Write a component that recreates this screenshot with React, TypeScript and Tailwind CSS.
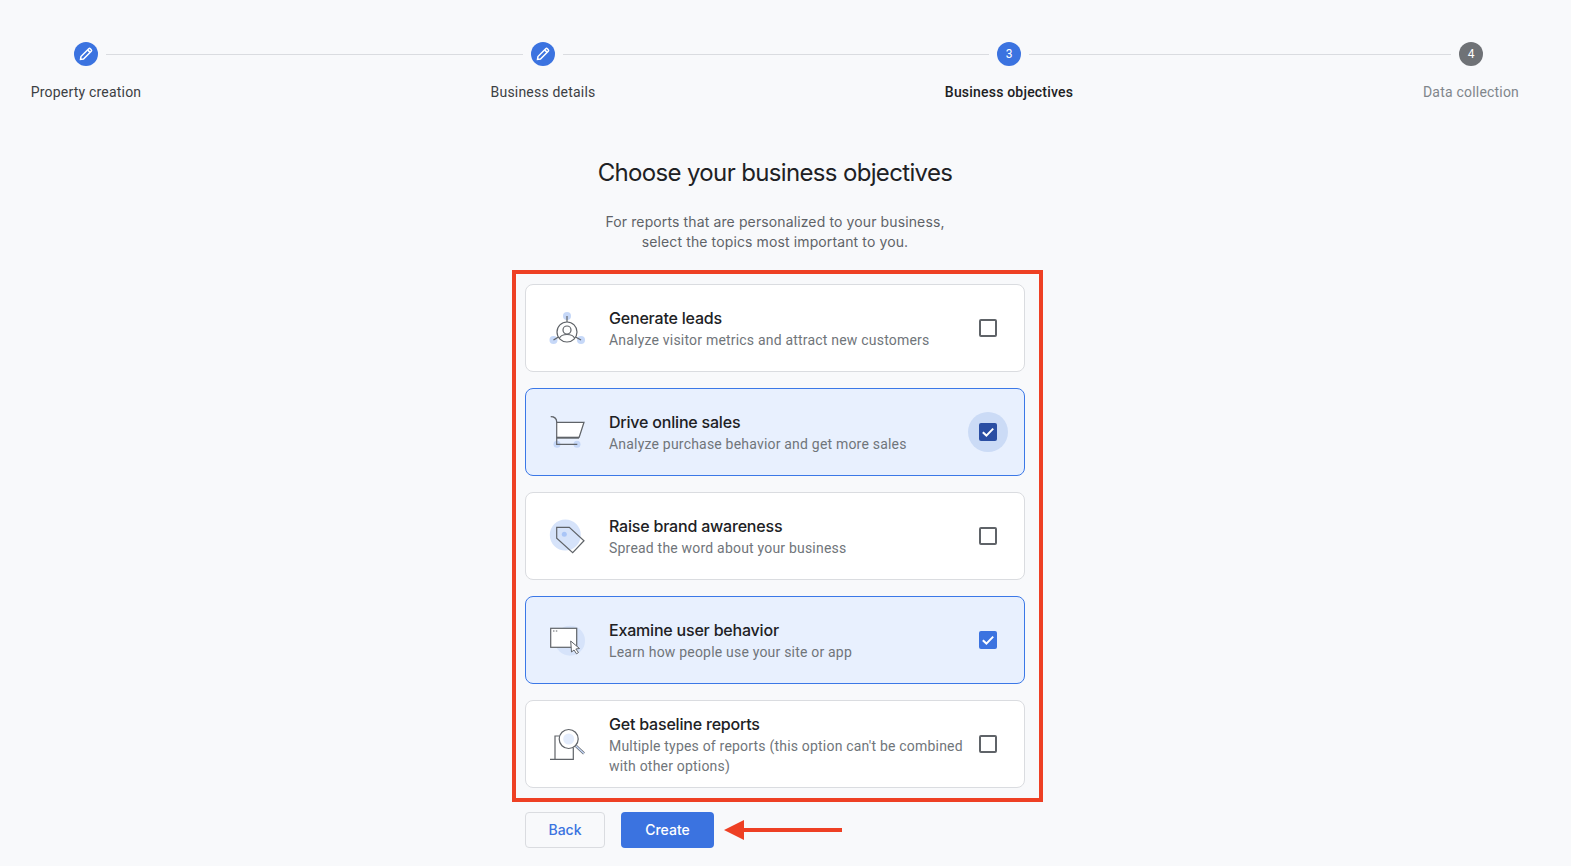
import * as React from "react";

type Step = { label: string; state: "done" | "active" | "todo"; num?: number };

const steps: Step[] = [
  { label: "Property creation", state: "done" },
  { label: "Business details", state: "done" },
  { label: "Business objectives", state: "active", num: 3 },
  { label: "Data collection", state: "todo", num: 4 },
];

const lineWidths = ["w-[417px]", "w-[426px]", "w-[422px]"];

function PencilIcon() {
  return (
    <svg width="16" height="16" viewBox="0 0 14 14" fill="none" stroke="#fff" strokeWidth="1.3">
      <path d="M2.2 11.8 L2.6 9.2 L9.4 2.4 a1 1 0 0 1 1.4 0 L11.6 3.2 a1 1 0 0 1 0 1.4 L4.8 11.4 Z" />
      <path d="M8.4 3.4 L10.6 5.6" />
    </svg>
  );
}

function LeadsIcon() {
  return (
    <svg width="40" height="40" viewBox="0 0 40 40" fill="none">
      <circle cx="20" cy="8" r="4" fill="#c6d8f8" />
      <circle cx="6.5" cy="32" r="4" fill="#c6d8f8" />
      <circle cx="34" cy="32" r="4" fill="#c6d8f8" />
      <g stroke="#5f6368" strokeWidth="1.2">
        <path d="M20 8 V14" />
        <path d="M6.5 32 L11.5 29" />
        <path d="M34 32 L28.5 29" />
        <circle cx="20" cy="24" r="10" />
        <circle cx="20" cy="22" r="4" />
        <path d="M12.5 30 C14 26.8 17 26.5 20 26.5 C23 26.5 26 26.8 27.5 30" />
      </g>
    </svg>
  );
}

function CartIcon() {
  return (
    <svg width="40" height="40" viewBox="0 0 40 40" fill="none">
      <circle cx="10" cy="32.3" r="3.5" fill="#c6d8f8" />
      <circle cx="30" cy="32.3" r="3.5" fill="#c6d8f8" />
      <path d="M9.7 10.3 H37 L32 25.7 H9.7 Z" fill="#fff" />
      <g stroke="#5f6368" strokeWidth="1.2">
        <path d="M3.7 4.7 C7 4.7 9.7 6.5 9.7 10 V32.3 H30.3" />
        <path d="M9.7 10.3 H37 L32 25.7" />
        <path d="M9.7 25.7 H32" strokeWidth="2" />
      </g>
    </svg>
  );
}

function TagIcon() {
  return (
    <svg width="40" height="40" viewBox="0 0 40 40" fill="none">
      <circle cx="18.3" cy="19" r="15.5" fill="#d6e3fa" />
      <circle cx="17.3" cy="18.3" r="2.5" fill="#a9c5f7" />
      <path d="M9.7 11.3 H22.3 L37 24.7 L25.7 36.7 L9.7 22.3 Z" stroke="#5f6368" strokeWidth="1.2" />
    </svg>
  );
}

function WindowIcon() {
  return (
    <svg width="40" height="40" viewBox="0 0 40 40" fill="none">
      <circle cx="23" cy="20.7" r="15" fill="#d6e3fa" />
      <rect x="3.7" y="8.3" width="26" height="19" fill="#fff" stroke="#5f6368" strokeWidth="1.2" />
      <path d="M6 11 H7.5 M8.8 11 H10.3" stroke="#5f6368" strokeWidth="1" />
      <path d="M23.7 21 L32.5 28.5 L28.8 29 L31.5 32.5 L29.5 33.8 L27 30 L24.5 32 Z" fill="#fff" stroke="#5f6368" strokeWidth="1" />
    </svg>
  );
}

function ReportIcon() {
  return (
    <svg width="40" height="40" viewBox="0 0 40 40" fill="none">
      <path d="M29 22 L37 29.5" stroke="#5f6368" strokeWidth="2.6" />
      <path d="M29 22 L37 29.5" stroke="#c6d8f8" strokeWidth="1.4" />
      <g stroke="#5f6368" strokeWidth="1.2">
        <path d="M12 12 H8 V35.3 M3 35.3 H26.3 V24" />
        <circle cx="21.7" cy="15" r="9.5" fill="#fff" />
      </g>
      <circle cx="21.7" cy="15" r="5.5" fill="#e3ecfc" />
    </svg>
  );
}

type Objective = {
  title: string;
  desc: string;
  icon: React.ReactNode;
  checked?: boolean;
  focused?: boolean;
};

const objectives: Objective[] = [
  { title: "Generate leads", desc: "Analyze visitor metrics and attract new customers", icon: <LeadsIcon /> },
  { title: "Drive online sales", desc: "Analyze purchase behavior and get more sales", icon: <CartIcon />, checked: true, focused: true },
  { title: "Raise brand awareness", desc: "Spread the word about your business", icon: <TagIcon /> },
  { title: "Examine user behavior", desc: "Learn how people use your site or app", icon: <WindowIcon />, checked: true },
  { title: "Get baseline reports", desc: "Multiple types of reports (this option can't be combined with other options)", icon: <ReportIcon /> },
];

function Checkbox({ checked, focused }: { checked?: boolean; focused?: boolean }) {
  return (
    <div className={`flex h-10 w-10 items-center justify-center rounded-full ${focused ? "bg-[#cbdbf6]" : ""}`}>
      {checked ? (
        <div className={`flex h-[18px] w-[18px] items-center justify-center rounded-[2px] ${focused ? "bg-[#2a4ea3]" : "bg-[#3b73e0]"}`}>
          <svg width="14" height="14" viewBox="0 0 14 14" fill="none" stroke="#fff" strokeWidth="2">
            <path d="M1.8 7.2 L5.4 10.6 L12.2 3.6" />
          </svg>
        </div>
      ) : (
        <div className="h-[18px] w-[18px] rounded-[2px] border-2 border-[#5f6368]" />
      )}
    </div>
  );
}

export default function App() {
  return (
    <div className="min-h-[866px] overflow-hidden bg-[#f8f9fb] font-['Roboto',sans-serif]">
      {/* stepper */}
      <div className="flex items-start pl-[74px] pt-[42px]">
        {steps.map((step, i) => (
          <React.Fragment key={step.label}>
            <div className="flex w-6 flex-col items-center">
              <div
                className={`flex h-6 w-6 items-center justify-center rounded-full text-xs text-white ${
                  step.state === "todo" ? "bg-[#6f7276]" : "bg-[#3b73e0]"
                }`}
              >
                {step.state === "done" ? <PencilIcon /> : step.num}
              </div>
              <div
                className={`mt-4 whitespace-nowrap text-sm leading-5 tracking-[0.2px] ${
                  step.state === "active"
                    ? "font-medium text-[#202124]"
                    : step.state === "done"
                      ? "text-[#3c4043]"
                      : "text-[#80868b]"
                }`}
              >
                {step.label}
              </div>
            </div>
            {i < lineWidths.length && <div className={`mx-2 mt-3 h-px bg-[#dadce0] ${lineWidths[i]}`} />}
          </React.Fragment>
        ))}
      </div>

      <h1 className="ml-[525px] mt-[55px] w-[500px] text-center font-['Inter',sans-serif] text-2xl leading-8 tracking-[-0.65px] text-[#202124]">
        Choose your business objectives
      </h1>
      <p className="ml-[525px] mt-[23px] w-[500px] text-center font-['Inter',sans-serif] text-sm leading-5 tracking-[0.12px] text-[#5f6368]">
        For reports that are personalized to your business,
        <br />
        select the topics most important to you.
      </p>

      {/* objective cards */}
      <div className="relative ml-[525px] mt-[32px] flex w-[500px] flex-col gap-4">
        {objectives.map((o) => (
          <div
            key={o.title}
            className={`flex h-[88px] items-center rounded-lg border pl-[21px] pr-[16px] ${
              o.checked ? "border-[#3b78e7] bg-[#e8f0fe]" : "border-[#dadce0] bg-white"
            }`}
          >
            <div className="shrink-0">{o.icon}</div>
            <div className="ml-[22px] min-w-0 flex-1">
              <div className="font-['Inter',sans-serif] text-base font-medium leading-6 tracking-[-0.2px] text-[#202124]">{o.title}</div>
              <div className="text-sm leading-5 tracking-[0.2px] text-[#70757a]">{o.desc}</div>
            </div>
            <Checkbox checked={o.checked} focused={o.focused} />
          </div>
        ))}
        {/* red annotation */}
        <div className="pointer-events-none absolute -bottom-[14px] -left-[13px] -right-[18px] -top-[14px] border-4 border-[#ee4024]" />
      </div>

      <div className="ml-[525px] mt-6 flex items-center gap-4">
        <button className="h-9 w-20 rounded border border-[#dadce0] font-['Inter',sans-serif] text-sm font-medium text-[#3b73e0]">
          Back
        </button>
        <button className="h-9 w-[93px] rounded bg-[#3b73e0] font-['Inter',sans-serif] text-sm font-medium text-white">
          Create
        </button>
        <svg className="-ml-[6px]" width="118" height="20" viewBox="0 0 118 20" fill="#ee4024">
          <path d="M0 10 L20 0 V8 H118 V12 H20 V20 Z" />
        </svg>
      </div>
    </div>
  );
}
